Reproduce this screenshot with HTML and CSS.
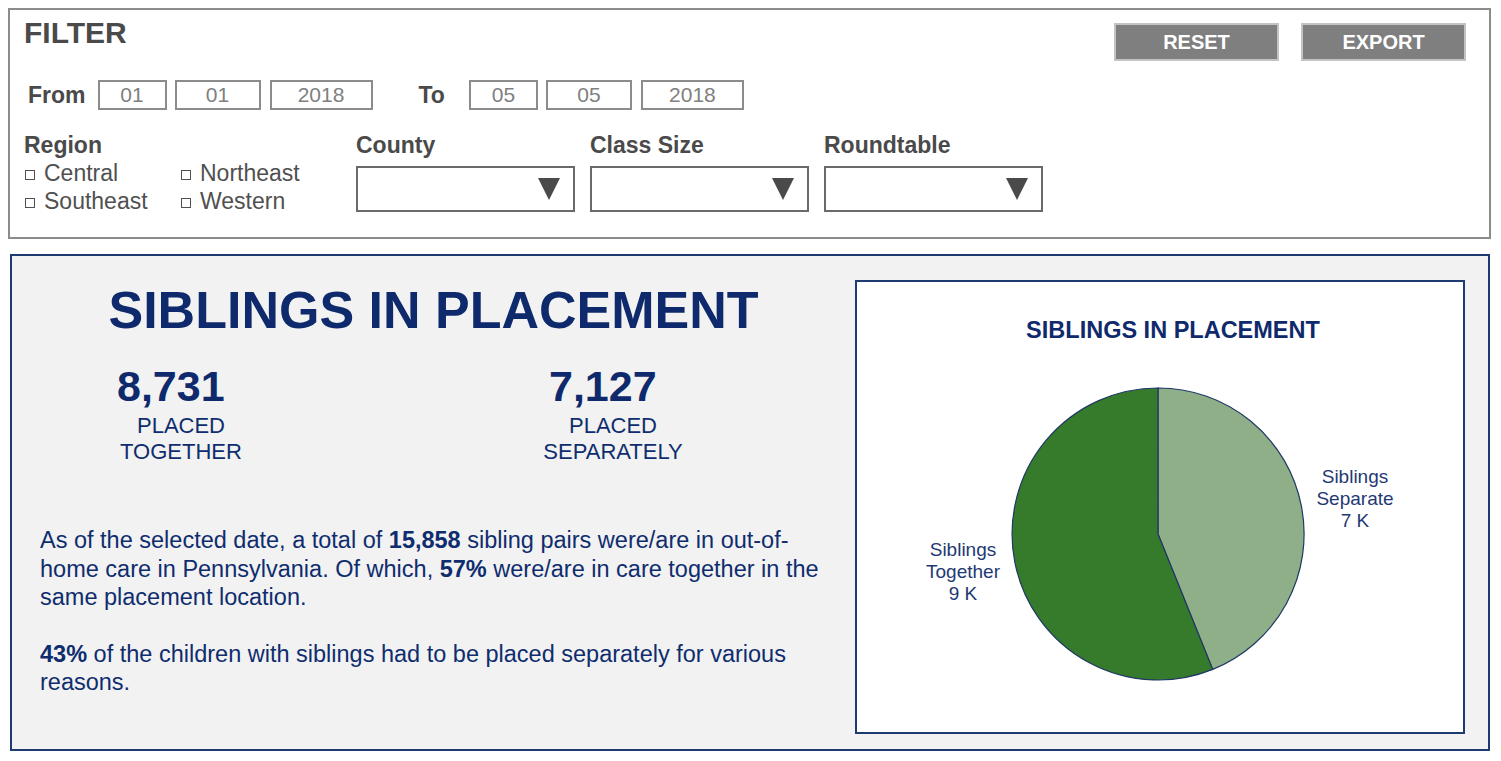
FILE: index.html
```html
<!DOCTYPE html>
<html lang="en">
<head>
<meta charset="utf-8">
<title>Siblings in Placement</title>
<link rel="stylesheet" href="styles.css">
</head>
<body>
<section class="filter">
  <div class="top-row">
    <h2 class="filter-title">FILTER</h2>
    <div class="buttons">
      <button class="btn">RESET</button>
      <button class="btn">EXPORT</button>
    </div>
  </div>
  <div class="date-row">
    <span class="date-label from">From</span>
    <span class="box w-sm">01</span>
    <span class="box w-md">01</span>
    <span class="box w-lg">2018</span>
    <span class="date-label to">To</span>
    <span class="box w-sm">05</span>
    <span class="box w-md">05</span>
    <span class="box w-lg">2018</span>
  </div>
  <div class="select-row">
    <div class="region">
      <div class="field-label">Region</div>
      <div class="checks">
        <span class="check"><i class="cb"></i>Central</span>
        <span class="check"><i class="cb"></i>Northeast</span>
        <span class="check"><i class="cb"></i>Southeast</span>
        <span class="check"><i class="cb"></i>Western</span>
      </div>
    </div>
    <div class="dd">
      <div class="field-label">County</div>
      <div class="select"><span class="tri"></span></div>
    </div>
    <div class="dd">
      <div class="field-label">Class Size</div>
      <div class="select"><span class="tri"></span></div>
    </div>
    <div class="dd">
      <div class="field-label">Roundtable</div>
      <div class="select"><span class="tri"></span></div>
    </div>
  </div>
</section>

<section class="main">
  <div class="left">
    <h1 class="main-title">SIBLINGS IN PLACEMENT</h1>
    <div class="stats">
      <div class="stat s1">
        <div class="num">8,731</div>
        <div class="lbl">PLACED</div>
        <div class="lbl">TOGETHER</div>
      </div>
      <div class="stat s2">
        <div class="num">7,127</div>
        <div class="lbl">PLACED</div>
        <div class="lbl">SEPARATELY</div>
      </div>
    </div>
    <p class="para">As of the selected date, a total of <b>15,858</b> sibling pairs were/are in out-of-home care in Pennsylvania. Of which, <b>57%</b> were/are in care together in the same placement location.</p>
    <p class="para"><b>43%</b> of the children with siblings had to be placed separately for various reasons.</p>
  </div>
  <div class="chart">
    <h3 class="chart-title">SIBLINGS IN PLACEMENT</h3>
    <svg class="pie" width="606" height="372" viewBox="0 0 606 372">
      <path d="M301,174 L301,28 A146,146 0 0,1 355.7,309.4 Z" fill="#8faf89" stroke="#1f3864" stroke-width="1.2"/>
      <path d="M301,174 L355.7,309.4 A146,146 0 1,1 301,28 Z" fill="#367a2b" stroke="#1f3864" stroke-width="1.2"/>
      <g class="pie-label" text-anchor="middle">
        <text x="498" y="123">Siblings</text>
        <text x="498" y="145">Separate</text>
        <text x="498" y="167">7 K</text>
        <text x="106" y="196">Siblings</text>
        <text x="106" y="218">Together</text>
        <text x="106" y="240">9 K</text>
      </g>
    </svg>
  </div>
</section>
</body>
</html>
```

FILE: styles.css
```css
* { box-sizing: border-box; }
body {
  margin: 0;
  background: #ffffff;
  font-family: "Liberation Sans", Arial, sans-serif;
}

/* ---------- Filter panel ---------- */
.filter {
  margin: 8px 0 0 8px;
  width: 1483px;
  height: 231px;
  border: 2px solid #8c8c8c;
  padding: 7px 23px 0 14px;
}
.top-row {
  display: flex;
  justify-content: space-between;
  align-items: flex-start;
  height: 44px;
}
.filter-title {
  margin: 0;
  font-size: 30px;
  line-height: 32px;
  font-weight: bold;
  color: #4a4a4a;
}
.buttons {
  display: flex;
  gap: 22px;
  margin-top: 6px;
}
.btn {
  width: 165px;
  height: 38px;
  background: #7f7f7f;
  border: 2px solid #c3c3c3;
  color: #ffffff;
  font-family: "Liberation Sans", Arial, sans-serif;
  font-weight: bold;
  font-size: 20px;
  padding: 0;
}
.date-row {
  display: flex;
  align-items: center;
  height: 30px;
  margin-top: 19px;
}
.date-label {
  font-size: 23px;
  font-weight: bold;
  color: #4a4a4a;
}
.date-label.from { margin-left: 4px; margin-right: 12px; }
.date-label.to { margin-left: 38px; margin-right: 24px; }
.box {
  height: 30px;
  border: 2px solid #8c8c8c;
  color: #808080;
  font-size: 21px;
  display: flex;
  align-items: center;
  justify-content: center;
  margin-right: 8px;
}
.box.w-sm { width: 69px; }
.box.w-md { width: 86px; margin-right: 9px; }
.box.w-lg { width: 103px; }

.select-row {
  display: flex;
  margin-top: 22px;
}
.field-label {
  font-size: 23px;
  font-weight: bold;
  color: #4a4a4a;
  line-height: 26px;
}
.region { width: 332px; }
.checks {
  display: grid;
  grid-template-columns: 156px auto;
  line-height: 28px;
  margin-top: 1px;
}
.check {
  font-size: 23px;
  color: #505050;
  display: flex;
  align-items: center;
}
.cb {
  display: inline-block;
  width: 10px;
  height: 10px;
  border: 1px solid #505050;
  margin: 3px 9px 0 1px;
}
.dd { width: 219px; margin-right: 15px; }
.select {
  margin-top: 8px;
  height: 46px;
  border: 2px solid #6a6a6a;
  display: flex;
  align-items: center;
  justify-content: flex-end;
  padding-right: 13px;
}
.tri {
  width: 0;
  height: 0;
  border-left: 11px solid transparent;
  border-right: 11px solid transparent;
  border-top: 22px solid #4a4a4a;
}

/* ---------- Main panel ---------- */
.main {
  margin: 15px 0 0 10px;
  width: 1480px;
  height: 497px;
  border: 2px solid #1f3a73;
  background: #f2f2f2;
  display: flex;
  padding: 24px 23px 14px 0;
}
.left {
  flex: 1;
  color: #0f2d6e;
}
.main-title {
  margin: 0;
  text-align: center;
  font-size: 52px;
  line-height: 60px;
  font-weight: bold;
  color: #0f2a6c;
}
.stats {
  display: flex;
  margin-top: 24px;
}
.stat {
  width: 128px;
  display: flex;
  flex-direction: column;
  align-items: center;
}
.s1 { margin-left: 105px; }
.s2 { margin-left: 304px; }
.num {
  align-self: flex-start;
  font-size: 43px;
  font-weight: bold;
  line-height: 44px;
  color: #0f2a6c;
}
.lbl {
  font-size: 22px;
  line-height: 26px;
  color: #0f2d6e;
  white-space: nowrap;
}
.lbl:nth-child(2) { margin-top: 5px; }
.para {
  margin: 0 0 0 28px;
  width: 795px;
  font-size: 23.5px;
  line-height: 28.5px;
  color: #0f2d6e;
}
.para:first-of-type { margin-top: 61px; }
.para + .para { margin-top: 28px; }
.para b { font-weight: bold; }

.chart {
  width: 610px;
  height: 454px;
  background: #ffffff;
  border: 2px solid #1f3a73;
  display: flex;
  flex-direction: column;
}
.chart-title {
  margin: 35px 0 0 0;
  text-align: center;
  font-size: 23.5px;
  line-height: 26px;
  font-weight: bold;
  color: #0f2a6c;
  padding-left: 26px;
}
.pie { display: block; margin-top: 17px; }
.pie-label {
  font-family: "Liberation Sans", Arial, sans-serif;
  font-size: 19px;
  fill: #1f3a73;
}
```
